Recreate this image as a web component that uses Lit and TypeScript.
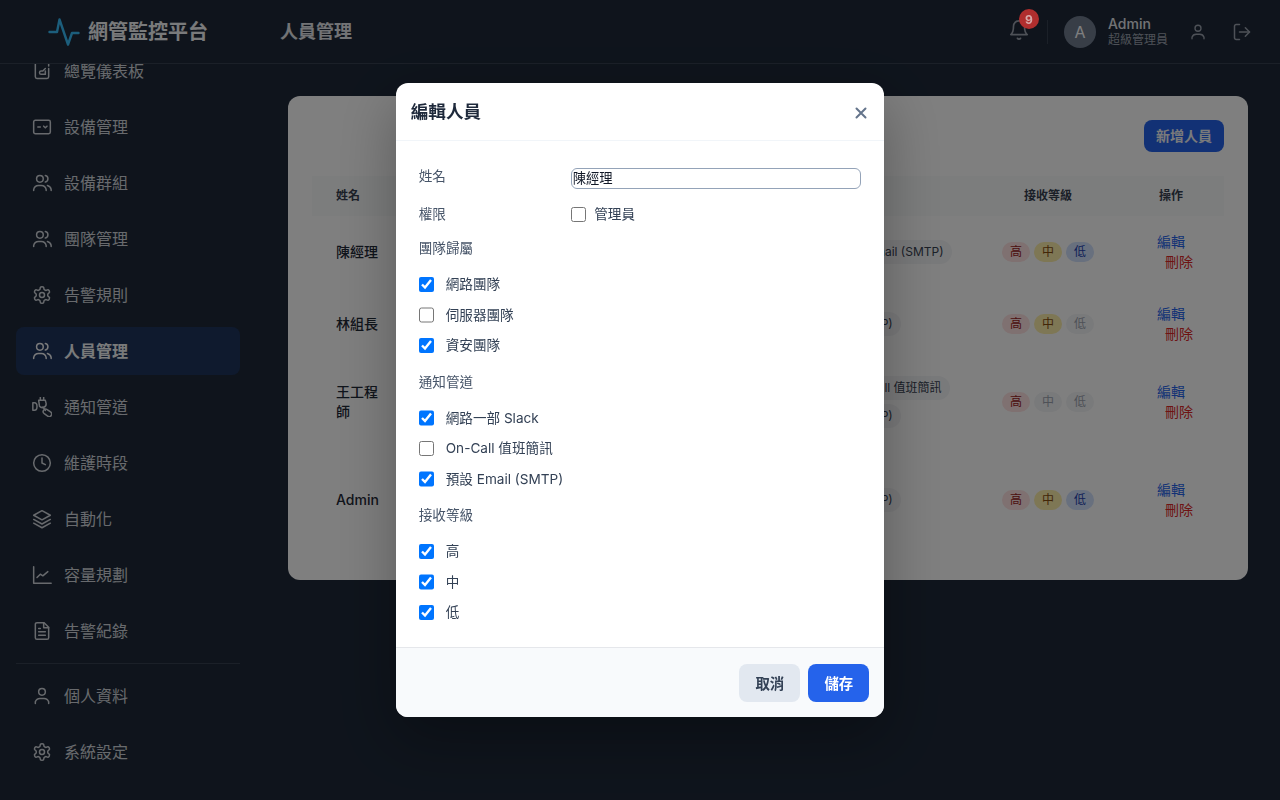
import {LitElement, html, css, svg} from 'lit';
import {customElement} from 'lit/decorators.js';

const icons: Record<string, any> = {
  dash: svg`<path d="M4 2v17a2 2 0 0 0 2 2h12a2 2 0 0 0 2-2V9"/><path d="M20 2v4"/><path d="M16 16h-5a2 2 0 0 1 0-4h2l3-3"/><path d="M16 16v-4"/>`,
  monitor: svg`<rect x="2" y="4" width="20" height="16" rx="2"/><path d="M7 12h3"/><path d="m14 11 2 2 2-2"/>`,
  users: svg`<circle cx="9.5" cy="7" r="4"/><path d="M2 21v-1a6 6 0 0 1 6-5h3a6 6 0 0 1 6 5v1"/><path d="M16 3.1a4 4 0 0 1 0 7.8"/><path d="M23 21v-1a6 6 0 0 0-4.500-5"/>`,
  cog: svg`<path d="M12.220 2h-.44a2 2 0 0 0-2 2v.18a2 2 0 0 1-1 1.730l-.43.25a2 2 0 0 1-2 0l-.15-.08a2 2 0 0 0-2.730.73l-.22.38a2 2 0 0 0 .73 2.730l.15.1a2 2 0 0 1 1 1.720v.51a2 2 0 0 1-1 1.740l-.15.09a2 2 0 0 0-.73 2.730l.22.38a2 2 0 0 0 2.730.73l.15-.08a2 2 0 0 1 2 0l.43.25a2 2 0 0 1 1 1.730V20a2 2 0 0 0 2 2h.44a2 2 0 0 0 2-2v-.18a2 2 0 0 1 1-1.730l.43-.25a2 2 0 0 1 2 0l.15.08a2 2 0 0 0 2.730-.73l.22-.39a2 2 0 0 0-.73-2.730l-.15-.08a2 2 0 0 1-1-1.740v-.5a2 2 0 0 1 1-1.740l.15-.09a2 2 0 0 0 .73-2.730l-.22-.38a2 2 0 0 0-2.730-.73l-.15.08a2 2 0 0 1-2 0l-.43-.25a2 2 0 0 1-1-1.730V4a2 2 0 0 0-2-2z"/><circle cx="12" cy="12" r="3"/>`,
  plug: svg`<path d="M1 7h2a3 4.500 0 0 1 0 9H1z"/><path d="M10 0v4M14 0v4M8 4h8l1 4a4.500 4.500 0 0 1-8 3z"/><path d="m13 12 3 4"/><rect x="13" y="16" width="11" height="6" rx="3" transform="rotate(35 18.500 19)"/>`,
  clock: svg`<circle cx="12" cy="12" r="10"/><path d="M12 6v6l4 2"/>`,
  layers: svg`<path d="m12 2 10 5.500-10 5.500L2 7.500z"/><path d="m2 12.500 10 5.500 10-5.500"/><path d="m2 17 10 5.500L22 17"/>`,
  chart: svg`<path d="M2 2v20h21"/><path d="m6 15 4-4 3 2 6-5"/>`,
  file: svg`<path d="M14.500 2H6a2 2 0 0 0-2 2v16a2 2 0 0 0 2 2h12a2 2 0 0 0 2-2V7.500z"/><path d="M14 2v6h6"/><path d="M8 13h8M8 17h8M8 9h2"/>`,
  user: svg`<circle cx="12" cy="7" r="4"/><path d="M4 21v-2a6 6 0 0 1 6-4h4a6 6 0 0 1 6 4v2"/>`,
  bell: svg`<path d="M6 8a6 6 0 0 1 12 0c0 7 3 9 3 9H3s3-2 3-9"/><path d="M10.300 21a1.940 1.940 0 0 0 3.400 0"/>`,
  logout: svg`<path d="M9 21H5a2 2 0 0 1-2-2V5a2 2 0 0 1 2-2h4"/><path d="m16 17 5-5-5-5"/><path d="M21 12H9"/>`,
};

const navTop = [
  ['dash', '總覽儀表板'], ['monitor', '設備管理'], ['users', '設備群組'], ['users', '團隊管理'],
  ['cog', '告警規則'], ['users', '人員管理'], ['plug', '通知管道'], ['clock', '維護時段'],
  ['layers', '自動化'], ['chart', '容量規劃'], ['file', '告警紀錄'],
];
const navBottom = [['user', '個人資料'], ['cog', '系統設定']];

const rows = [
  {name: '陳經理', email: 'chen@example.com', teams: ['網路團隊', '資安團隊'], channels: ['Slack', '預設 Email (SMTP)'], levels: [1, 1, 1]},
  {name: '林組長', email: 'lin@example.com', teams: ['伺服器團隊'], channels: ['預設 Email (SMTP)'], levels: [1, 1, 0]},
  {name: '王工程師', email: 'wang@example.com', teams: ['網路團隊'], channels: ['Slack2', 'On-Call 值班簡訊', '預設 Email (SMTP)'], levels: [1, 0, 0]},
  {name: 'Admin', email: 'admin@example.com', teams: ['網路團隊', '伺服器團隊', '資安團隊'], channels: ['預設 Email (SMTP)'], levels: [1, 1, 1]},
];
const levelNames = ['高', '中', '低'];
const levelClass = ['high', 'mid', 'low'];

const groups = [
  {title: '團隊歸屬', items: [['網路團隊', true], ['伺服器團隊', false], ['資安團隊', true]]},
  {title: '通知管道', items: [['網路一部 Slack', true], ['On-Call 值班簡訊', false], ['預設 Email (SMTP)', true]]},
  {title: '接收等級', items: [['高', true], ['中', true], ['低', true]]},
];

@customElement('app-root')
export class AppRoot extends LitElement {
  static styles = css`
    :host {
      display: block;
      height: 800px;
      overflow: hidden;
      background: #1e2939;
      font-family: Inter, 'Noto Sans CJK TC', sans-serif;
      color: #1f2937;
    }

    .icon {
      fill: none;
      stroke: currentColor;
      stroke-width: 1.8;
      stroke-linecap: round;
      stroke-linejoin: round;
      flex: none;
    }

    .topbar {
      height: 64px;
      box-sizing: border-box;
      border-bottom: 1px solid #374151;
      display: flex;
      align-items: center;
      padding-right: 28px;
    }

    .brand {
      width: 256px;
      box-sizing: border-box;
      padding-left: 48px;
      display: flex;
      align-items: center;
      gap: 8px;
      font-size: 20px;
      font-weight: 700;
      color: #f3f4f6;
    }

    .brand span {
      margin-top: -2px;
    }

    .brand svg {
      fill: none;
      stroke: #38bdf8;
      stroke-width: 2.4;
      stroke-linecap: round;
      stroke-linejoin: round;
    }

    .page-title {
      margin: -3px 0 0 24px;
      font-size: 18px;
      font-weight: 600;
      color: #e5e7eb;
      flex: 1;
    }

    .bell {
      position: relative;
      display: flex;
      color: #9ca3af;
      margin: -3px 17px 0 0;
    }

    .badge {
      position: absolute;
      z-index: 60;
      top: -10px;
      left: 11px;
      width: 20px;
      height: 20px;
      border-radius: 50%;
      background: #b02e2e;
      color: #d8a8a8;
      font-size: 12px;
      font-weight: 700;
      display: flex;
      align-items: center;
      justify-content: center;
    }

    .sep {
      width: 1px;
      height: 24px;
      background: #374151;
      margin-right: 16px;
    }

    .avatar {
      width: 32px;
      height: 32px;
      border-radius: 50%;
      background: #707c8f;
      color: #fff;
      font-size: 16px;
      font-weight: 400;
      display: flex;
      align-items: center;
      justify-content: center;
      margin-right: 12px;
    }

    .who {
      width: 64px;
      color: #e5e7eb;
      font-size: 14px;
      font-weight: 500;
      line-height: 17px;
      white-space: nowrap;
    }

    .who small {
      display: block;
      font-size: 12px;
      font-weight: 400;
      line-height: 16px;
      color: #9ca3af;
    }

    .tool {
      display: flex;
      color: #9ca3af;
      margin-left: 17px;
    }

    .tool.logout {
      margin-left: 25px;
    }

    .layout {
      display: flex;
      height: 736px;
    }

    .sidebar {
      width: 256px;
      flex: none;
      overflow: hidden;
      box-sizing: border-box;
      padding: 0 16px;
    }

    .nav {
      margin-top: -17px;
      display: flex;
      flex-direction: column;
      gap: 8px;
    }

    .item {
      height: 48px;
      flex: none;
      display: flex;
      align-items: center;
      gap: 12px;
      padding: 0 16px;
      border-radius: 8px;
      font-size: 16px;
      color: #d1d5db;
    }

    .item span {
      margin-top: -2px;
    }

    .item.active {
      background: rgba(37, 99, 235, 0.2);
      color: #f3f4f6;
      font-weight: 600;
    }

    .nav-sep {
      height: 1px;
      background: #374151;
    }

    .main {
      flex: 1;
      padding: 32px;
      min-width: 0;
    }

    .card {
      background: #fff;
      border-radius: 12px;
      padding: 24px;
      height: 484px;
      box-sizing: border-box;
    }

    .card-head {
      display: flex;
      justify-content: flex-end;
      margin-bottom: 24px;
    }

    .add {
      width: 80px;
      height: 32px;
      border-radius: 8px;
      border: none;
      background: #2563eb;
      color: #f3f4f6;
      font: inherit;
      font-size: 14px;
      font-weight: 600;
      padding: 0 0 3px;
    }

    table {
      width: 912px;
      border-collapse: collapse;
      table-layout: fixed;
    }

    th {
      background: #f9fafb;
      height: 40px;
      box-sizing: border-box;
      padding: 0 24px 4px;
      font-size: 12px;
      font-weight: 600;
      color: #374151;
      text-align: left;
    }

    td {
      padding: 16px 24px;
      font-size: 14px;
      font-weight: 400;
      line-height: 20px;
      color: #1f2937;
    }

    td.name {
      font-weight: 500;
    }

    td.mail {
      white-space: nowrap;
    }

    .chips {
      display: flex;
      flex-wrap: wrap;
      gap: 4px;
    }

    .chip {
      height: 24px;
      box-sizing: border-box;
      padding: 0 8px;
      border-radius: 12px;
      background: #f3f4f6;
      color: #374151;
      font-size: 12px;
      line-height: 24px;
      white-space: nowrap;
    }

    td.lv {
      padding-right: 0;
    }

    .levels {
      display: flex;
      gap: 4px;
    }

    .lvl {
      width: 28px;
      height: 20px;
      border-radius: 10px;
      font-size: 12px;
      line-height: 20px;
      text-align: center;
      background: #f3f4f6;
      color: #9ca3af;
    }

    .lvl.high.on {
      background: #fee2e2;
      color: #991b1b;
    }

    .lvl.mid.on {
      background: #fdeeab;
      color: #854d0e;
    }

    .lvl.low.on {
      background: #d0e0fc;
      color: #1e40af;
    }

    .th-lv {
      padding-left: 46px;
      padding-right: 0;
    }

    .th-act {
      padding-left: 26px;
      padding-right: 0;
    }

    td.act {
      padding-right: 0;
    }

    .edit {
      color: #2563eb;
      display: block;
    }

    .del {
      color: #dc2626;
      display: block;
      margin-left: 8px;
    }

    .overlay {
      position: fixed;
      inset: 0;
      z-index: 50;
      background: rgba(0, 0, 0, 0.5);
      display: flex;
      align-items: center;
      justify-content: center;
    }

    .modal {
      width: 488.6px;
      height: 634px;
      display: flex;
      flex-direction: column;
      background: #fff;
      border-radius: 12px;
      overflow: hidden;
      box-shadow: 0 20px 60px rgba(0, 0, 0, 0.3);
    }

    .modal-head {
      height: 58px;
      box-sizing: border-box;
      flex: none;
      border-bottom: 1px solid #f1f5f9;
      padding: 0 17px 0 15px;
      display: flex;
      align-items: center;
      justify-content: space-between;
    }

    .modal-head h2 {
      margin: -2px 0 0;
      font-size: 17.6px;
      font-weight: 700;
      color: #1e293b;
    }

    .close {
      fill: none;
      stroke: #64748b;
      stroke-width: 2;
      stroke-linecap: round;
      margin-top: 3px;
    }

    .modal-body {
      flex: 1;
      padding: 27px 23px 0;
      font-size: 13.6px;
      line-height: 20.5px;
      color: #334155;
    }

    .form-row {
      display: flex;
      align-items: center;
    }

    .form-row > span {
      width: 152px;
      flex: none;
      color: #475569;
    }

    .name-row {
      align-items: flex-start;
      height: 21px;
      margin-bottom: 15px;
    }

    .name-row > span {
      line-height: 17px;
    }

    input[type='text'] {
      flex: 1;
      min-width: 0;
      height: 21px;
      box-sizing: border-box;
      padding: 0 1px 2px;
      border: 1px solid #94a3b8;
      border-radius: 6px;
      outline: none;
      font-family: inherit;
      font-size: 13.33px;
      color: #111827;
    }

    input[type='checkbox'] {
      width: 15.5px;
      height: 15.5px;
      margin: 0;
      flex: none;
    }

    .check {
      display: flex;
      align-items: center;
      gap: 11.5px;
    }

    .perm-row {
      margin-bottom: 13.5px;
    }

    .perm-row .check {
      gap: 8px;
    }

    .group {
      margin-bottom: 16px;
    }

    .group-title {
      color: #475569;
      margin-bottom: 15.5px;
    }

    .group-list {
      display: flex;
      flex-direction: column;
      gap: 10px;
    }

    .modal-foot {
      height: 70px;
      box-sizing: border-box;
      flex: none;
      border-top: 1px solid #e5e7eb;
      background: #f8fafc;
      padding: 0 15px;
      display: flex;
      align-items: center;
      justify-content: flex-end;
      gap: 8px;
    }

    .btn {
      width: 61px;
      height: 38px;
      border: none;
      border-radius: 8px;
      padding: 0;
      font-family: inherit;
      font-size: 14.4px;
      font-weight: 600;
    }

    .btn.cancel {
      background: #e2e8f0;
      color: #334155;
    }

    .btn.save {
      background: #2563eb;
      color: #fff;
    }
  `;

  private icon(name: string, size = 20) {
    return html`<svg class="icon" width=${size} height=${size} viewBox="0 0 24 24">${icons[name]}</svg>`;
  }

  private navItem(item: string[]) {
    const active = item[1] === '人員管理';
    return html`<div class="item ${active ? 'active' : ''}">${this.icon(item[0])}<span>${item[1]}</span></div>`;
  }

  render() {
    return html`
      <header class="topbar">
        <div class="brand">
          <svg width="32" height="32" viewBox="0 0 32 32"><polyline points="1.500,16 9,16 11.500,3.500 20,28.500 24,17 30.500,17"/></svg>
          <span>網管監控平台</span>
        </div>
        <div class="page-title">人員管理</div>
        <div class="bell">${this.icon('bell', 22)}<span class="badge">9</span></div>
        <div class="sep"></div>
        <div class="avatar">A</div>
        <div class="who">Admin<small>超級管理員</small></div>
        <div class="tool">${this.icon('user', 18)}</div>
        <div class="tool logout">${this.icon('logout', 20)}</div>
      </header>
      <div class="layout">
        <aside class="sidebar">
          <nav class="nav">
            ${navTop.map((i) => this.navItem(i))}
            <div class="nav-sep"></div>
            ${navBottom.map((i) => this.navItem(i))}
          </nav>
        </aside>
        <main class="main">
          <section class="card">
            <div class="card-head"><button class="add">新增人員</button></div>
            <table>
              <colgroup>
                <col style="width:92px" /><col style="width:169px" /><col style="width:184px" />
                <col style="width:221px" /><col style="width:155px" /><col style="width:91px" />
              </colgroup>
              <thead>
                <tr>
                  <th>姓名</th><th>Email</th><th>團隊</th><th>通知管道</th>
                  <th class="th-lv">接收等級</th><th class="th-act">操作</th>
                </tr>
              </thead>
              <tbody>
                ${rows.map((r) => html`
                  <tr>
                    <td class="name">${r.name}</td>
                    <td class="mail">${r.email}</td>
                    <td><div class="chips">${r.teams.map((t) => html`<span class="chip">${t}</span>`)}</div></td>
                    <td><div class="chips">${r.channels.map((c) => html`<span class="chip">${c}</span>`)}</div></td>
                    <td class="lv"><div class="levels">
                      ${levelNames.map((n, i) => html`<span class="lvl ${levelClass[i]} ${r.levels[i] ? 'on' : ''}">${n}</span>`)}
                    </div></td>
                    <td class="act"><span class="edit">編輯</span><span class="del">刪除</span></td>
                  </tr>
                `)}
              </tbody>
            </table>
          </section>
        </main>
      </div>
      <div class="overlay">
        <div class="modal">
          <div class="modal-head">
            <h2>編輯人員</h2>
            <svg class="close" width="12" height="12" viewBox="0 0 12 12"><path d="M1.500 1.500l9 9M10.500 1.500l-9 9"/></svg>
          </div>
          <div class="modal-body">
            <div class="form-row name-row"><span>姓名</span><input type="text" .value=${'陳經理'} /></div>
            <div class="form-row perm-row">
              <span>權限</span>
              <label class="check"><input type="checkbox" />管理員</label>
            </div>
            ${groups.map((g) => html`
              <div class="group">
                <div class="group-title">${g.title}</div>
                <div class="group-list">
                  ${g.items.map((it) => html`<label class="check"><input type="checkbox" .checked=${it[1] as boolean} />${it[0]}</label>`)}
                </div>
              </div>
            `)}
          </div>
          <div class="modal-foot">
            <button class="btn cancel">取消</button>
            <button class="btn save">儲存</button>
          </div>
        </div>
      </div>
    `;
  }
}
